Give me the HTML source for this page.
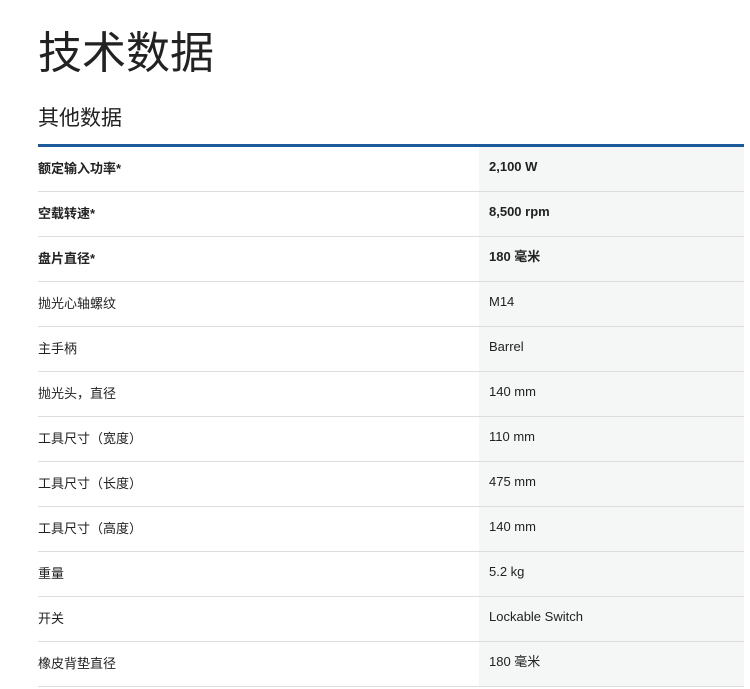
<!DOCTYPE html>
<html><head><meta charset="utf-8"><style>
body{margin:0;background:#fff;width:750px;height:689px;overflow:hidden;font-family:"Liberation Sans","Noto Sans CJK SC",sans-serif;color:#222}
h1{position:absolute;left:38px;top:24px;margin:0;font-weight:400;font-size:44px;line-height:60px;letter-spacing:0px;color:#222}
h2{position:absolute;left:38px;top:105px;margin:0;font-weight:400;font-size:21px;line-height:28px;color:#222}
.line{position:absolute;left:38px;top:144px;width:706px;height:3px;background:#1c5a9c}
.tab{position:absolute;left:38px;top:147px;width:706px}
.r{height:44px;border-bottom:1px solid #ddd;display:flex;font-size:13px}
.k{width:441px;line-height:44px}
.v{flex:1;background:#f5f6f6;padding-left:10px;line-height:40px}
.b{font-weight:bold}
</style></head><body>
<h1>技术数据</h1>
<h2>其他数据</h2>
<div class="line"></div>
<div class="tab">
<div class="r b"><div class="k">额定输入功率*</div><div class="v">2,100 W</div></div>
<div class="r b"><div class="k">空载转速*</div><div class="v">8,500 rpm</div></div>
<div class="r b"><div class="k">盘片直径*</div><div class="v">180 毫米</div></div>
<div class="r"><div class="k">抛光心轴螺纹</div><div class="v">M14</div></div>
<div class="r"><div class="k">主手柄</div><div class="v">Barrel</div></div>
<div class="r"><div class="k">抛光头，直径</div><div class="v">140 mm</div></div>
<div class="r"><div class="k">工具尺寸（宽度）</div><div class="v">110 mm</div></div>
<div class="r"><div class="k">工具尺寸（长度）</div><div class="v">475 mm</div></div>
<div class="r"><div class="k">工具尺寸（高度）</div><div class="v">140 mm</div></div>
<div class="r"><div class="k">重量</div><div class="v">5.2 kg</div></div>
<div class="r"><div class="k">开关</div><div class="v">Lockable Switch</div></div>
<div class="r"><div class="k">橡皮背垫直径</div><div class="v">180 毫米</div></div>
</div>
</body></html>
